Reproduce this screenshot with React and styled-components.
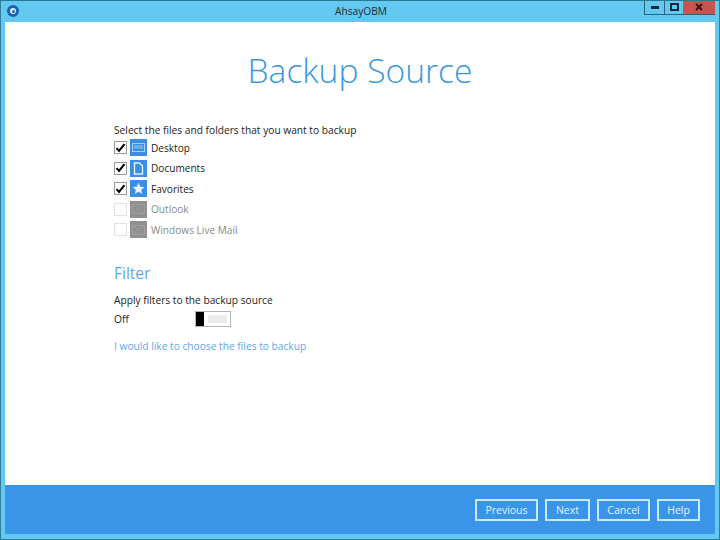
import React from 'react';
import styled, { createGlobalStyle } from 'styled-components';

const GlobalStyle = createGlobalStyle`
  html, body {
    margin: 0;
    padding: 0;
    background: #63c9f0;
  }
  body {
    font-family: "Open Sans", "Liberation Sans", sans-serif;
  }
`;

const Frame = styled.div`
  width: 720px;
  height: 540px;
  box-sizing: border-box;
  background: #63c9f0;
  border: 1px solid #2f7f9c;
  border-top-color: #2b7891;
  display: flex;
  flex-direction: column;
  overflow: hidden;
`;

const TitleBar = styled.div`
  height: 21px;
  flex: none;
  display: grid;
  grid-template-columns: 1fr auto 1fr;
  align-items: start;
  padding: 0 4px 0 6px;
  color: #1c2b33;
  font-size: 10.2px;
`;

const AppIcon = styled.div`
  width: 12px;
  height: 12px;
  margin-top: 4px;
  box-sizing: border-box;
  border-radius: 50%;
  border: 3px solid #1b62b5;
  background: #dff2fb;
  display: flex;
  align-items: center;
  justify-content: center;
  &::after {
    content: '';
    width: 3px;
    height: 3px;
    border-radius: 50%;
    background: #1b62b5;
  }
`;

const TitleText = styled.div`
  line-height: 21px;
`;

const Controls = styled.div`
  justify-self: end;
  display: flex;
  margin-top: -1px;
`;

const Control = styled.div`
  height: 15px;
  width: ${p => p.$w}px;
  box-sizing: border-box;
  background: ${p => (p.$close ? '#c75450' : '#63c9f0')};
  border: 1px solid #2b6478;
  border-top: none;
  border-left: ${p => (p.$close ? 'none' : '1px solid #2b6478')};
  border-right: ${p => (p.$close ? 'none' : '0')};
  display: flex;
  align-items: center;
  justify-content: center;
`;

const Body = styled.div`
  flex: 1;
  margin: 0 4px;
  display: flex;
  flex-direction: column;
  min-height: 0;
`;

const Content = styled.main`
  flex: 1;
  background: #fff;
  padding: 0 0 0 109px;
  min-height: 0;
`;

const PageTitle = styled.h1`
  margin: 0;
  padding: 24px 0 0;
  margin-left: -109px;
  text-align: center;
  font-size: 33.6px;
  line-height: 49px;
  font-weight: 300;
  color: #3a97df;
`;

const Lead = styled.div`
  margin-top: 28px;
  font-size: 10.2px;
  line-height: 15px;
  color: #222;
`;

const SourceList = styled.div`
  margin-top: 1px;
  display: flex;
  flex-direction: column;
  gap: 3.5px;
`;

const SourceRow = styled.div`
  display: flex;
  align-items: center;
  height: 17px;
  font-size: 10.1px;
  color: ${p => (p.$disabled ? '#8a8a8a' : '#222')};
`;

const CheckBox = styled.div`
  width: 13px;
  height: 13px;
  box-sizing: border-box;
  border: 1px solid ${p => (p.$disabled ? '#e2e2e2' : '#9a9a9a')};
  background: #fff;
  display: flex;
  align-items: center;
  justify-content: center;
  margin-right: 3px;
`;

const SourceIcon = styled.div`
  width: 17px;
  height: 17px;
  background: ${p => (p.$disabled ? '#8f8f8f' : '#3a8ee6')};
  display: flex;
  align-items: center;
  justify-content: center;
  margin-right: 4px;
`;

const SectionTitle = styled.h2`
  margin: 24px 0 0;
  font-size: 15.5px;
  line-height: 22px;
  font-weight: 400;
  color: #5fa8e6;
`;

const FilterLead = styled.div`
  margin-top: 9px;
  font-size: 10.2px;
  line-height: 15px;
  color: #222;
`;

const ToggleRow = styled.div`
  margin-top: 2px;
  height: 17px;
  display: flex;
  align-items: center;
  font-size: 10.2px;
  color: #222;
`;

const ToggleLabel = styled.div`
  width: 81px;
`;

const Toggle = styled.div`
  width: 36px;
  height: 16px;
  box-sizing: border-box;
  border: 1px solid #b5b5b5;
  background: #fff;
  display: flex;
  align-items: center;
  padding-right: 3px;
`;

const ToggleKnob = styled.div`
  width: 8px;
  height: 14px;
  background: #000;
  margin-right: 4px;
`;

const ToggleTrack = styled.div`
  flex: 1;
  height: 8px;
  background: #ebebeb;
`;

const ChooseLink = styled.a`
  display: block;
  margin-top: 12px;
  font-size: 10.2px;
  line-height: 15px;
  color: #5fa8e6;
`;

const Footer = styled.footer`
  height: 49px;
  flex: none;
  background: #3a94e8;
  display: flex;
  justify-content: flex-end;
  align-items: flex-start;
  gap: 7px;
  padding: 14px 15px 0 0;
  box-sizing: border-box;
`;

const FooterButton = styled.button`
  width: ${p => p.$w}px;
  height: 22px;
  box-sizing: border-box;
  background: transparent;
  border: 2px solid #c8ebfb;
  color: #e3f4fd;
  font-family: inherit;
  font-size: 10.5px;
  padding: 0;
`;

const FrameBottom = styled.div`
  height: 5px;
  flex: none;
`;

const check = (
  <svg width="11" height="10" viewBox="0 0 11 10">
    <path d="M1.5 5.2 L4 8 L9.5 1.2" fill="none" stroke="#000" strokeWidth="2" />
  </svg>
);

const DesktopGlyph = () => (
  <svg width="13" height="11" viewBox="0 0 13 11">
    <rect x="0.5" y="1.5" width="12" height="8" fill="none" stroke="#a9d0f6" />
    <rect x="2" y="3" width="9" height="4" fill="#6aaef0" />
  </svg>
);

const DocGlyph = () => (
  <svg width="11" height="13" viewBox="0 0 11 13">
    <path d="M1.5 1 H6.5 L9.5 4 V12 H1.5 Z" fill="none" stroke="#e3f0fd" strokeWidth="1.4" />
  </svg>
);

const StarGlyph = () => (
  <svg width="13" height="13" viewBox="0 0 13 13">
    <path d="M6.5 0.8 L8.2 4.7 L12.4 5.1 L9.2 7.9 L10.2 12 L6.5 9.8 L2.8 12 L3.8 7.9 L0.6 5.1 L4.8 4.7 Z" fill="#e6f2fd" />
  </svg>
);

const MailGlyph = () => (
  <svg width="13" height="10" viewBox="0 0 13 10">
    <rect x="0.5" y="0.5" width="12" height="9" fill="none" stroke="#a0a0a0" />
    <path d="M1 1 L6.5 5.5 L12 1 M1 9 L5 5 M12 9 L8 5" fill="none" stroke="#9c9c9c" />
  </svg>
);

const sources = [
  { name: 'Desktop', glyph: <DesktopGlyph /> },
  { name: 'Documents', glyph: <DocGlyph /> },
  { name: 'Favorites', glyph: <StarGlyph /> },
  { name: 'Outlook', glyph: <MailGlyph />, disabled: true },
  { name: 'Windows Live Mail', glyph: <MailGlyph />, disabled: true },
];

export default function App() {
  return (
    <Frame>
      <GlobalStyle />
      <TitleBar>
        <AppIcon />
        <TitleText>AhsayOBM</TitleText>
        <Controls>
          <Control $w={20}>
            <svg width="8" height="3" viewBox="0 0 8 3"><rect width="8" height="3" fill="#14293a" y="0" /></svg>
          </Control>
          <Control $w={19}>
            <svg width="9" height="8" viewBox="0 0 9 8"><rect x="1" y="1" width="7" height="6" fill="none" stroke="#14293a" strokeWidth="2" /></svg>
          </Control>
          <Control $w={32} $close>
            <svg width="8" height="8" viewBox="0 0 8 8"><path d="M1 1 L7 7 M7 1 L1 7" stroke="#2a1a1a" strokeWidth="2" /></svg>
          </Control>
        </Controls>
      </TitleBar>
      <Body>
        <Content>
          <PageTitle>Backup Source</PageTitle>
          <Lead>Select the files and folders that you want to backup</Lead>
          <SourceList>
            {sources.map(s => (
              <SourceRow key={s.name} $disabled={s.disabled}>
                <CheckBox $disabled={s.disabled}>{!s.disabled && check}</CheckBox>
                <SourceIcon $disabled={s.disabled}>{s.glyph}</SourceIcon>
                {s.name}
              </SourceRow>
            ))}
          </SourceList>
          <SectionTitle>Filter</SectionTitle>
          <FilterLead>Apply filters to the backup source</FilterLead>
          <ToggleRow>
            <ToggleLabel>Off</ToggleLabel>
            <Toggle>
              <ToggleKnob />
              <ToggleTrack />
            </Toggle>
          </ToggleRow>
          <ChooseLink>I would like to choose the files to backup</ChooseLink>
        </Content>
        <Footer>
          <FooterButton $w={63}>Previous</FooterButton>
          <FooterButton $w={45}>Next</FooterButton>
          <FooterButton $w={53}>Cancel</FooterButton>
          <FooterButton $w={43}>Help</FooterButton>
        </Footer>
      </Body>
      <FrameBottom />
    </Frame>
  );
}
